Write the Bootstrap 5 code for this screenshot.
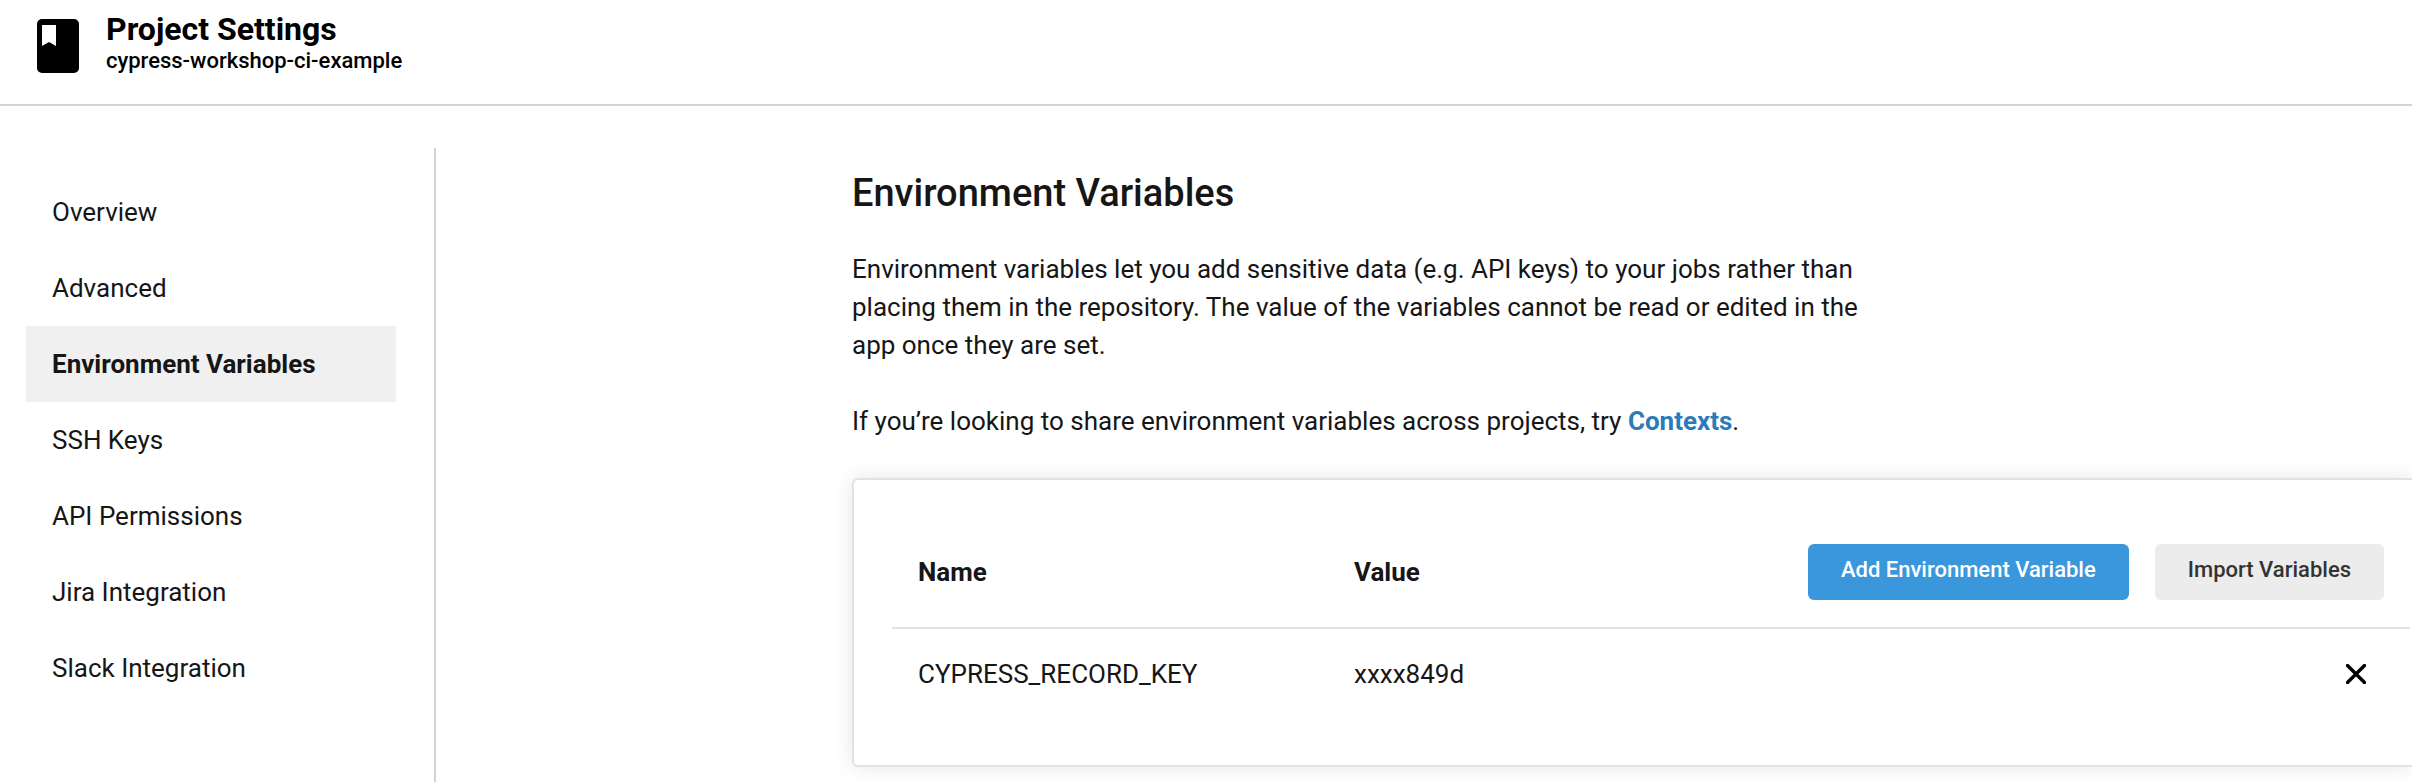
<!DOCTYPE html>
<html lang="en">
<head>
<meta charset="utf-8">
<meta name="viewport" content="width=device-width, initial-scale=1">
<title>Project Settings</title>
<link href="https://cdn.jsdelivr.net/npm/bootstrap@5.3.0/dist/css/bootstrap.min.css" rel="stylesheet">
<style>
  body { font-family: Roboto, "Liberation Sans", sans-serif; font-size: 26px; line-height: 38px; color: #161616; background: #fff; }
  .page-header { height: 106px; padding: 10px 36px; border-bottom: 2px solid #d3d3d3; color: #000; }
  .project-icon { width: 44px; height: 54px; margin-top: 9px; margin-right: 26px; }
  .page-title { font-size: 32px; line-height: 38px; font-weight: 700; }
  .page-subtitle { font-size: 22px; line-height: 26px; font-weight: 500; }
  .page-body { padding-top: 42px; }
  .side-nav { width: 436px; padding: 26px 38px 0 26px; border-right: 2px solid #d3d3d3; }
  .side-nav .nav-link { padding: 19px 26px; color: #161616; border-radius: 0; }
  .side-nav .nav-link.active { background: #f0f0f0; color: #161616; font-weight: 700; }
  .settings-main { min-width: 0; padding: 20px 0 10px 416px; }
  .section-title { font-size: 38px; line-height: 50px; font-weight: 500; margin-bottom: 32px; }
  .intro { max-width: 1012px; }
  .intro p { margin-bottom: 38px; }
  .intro a { color: #2b7bb9; font-weight: 700; text-decoration: none; }
  .vars-card { border: 2px solid #e2e2e2; border-right: 0; border-radius: 6px 0 0 6px; padding: 38px 2px 38px 38px; box-shadow: 0 0 20px rgba(0, 0, 0, .1); }
  .vars-table { table-layout: fixed; color: inherit; }
  .vars-table th, .vars-table td { padding: 0 26px; background: transparent; color: inherit; box-shadow: none; }
  .vars-table thead th { height: 110px; border-bottom: 2px solid #e2e2e2; font-weight: 700; vertical-align: middle; padding-bottom: 2px; }
  .vars-table tbody td { height: 99px; border: 0; padding-bottom: 9px; }
  .col-key { width: 436px; }
  .button-row { gap: 26px; }
  .btn-action { height: 56px; padding: 0 33px 4px; border: 0; border-radius: 6px; font-size: 22px; line-height: 28px; font-weight: 500; white-space: nowrap; }
  .btn-add, .btn-add:hover { background: #3b97dc; color: #fff; }
  .btn-import, .btn-import:hover { background: #ececec; color: #333; }
  .btn-remove { padding: 8px; margin-right: 10px; border: 0; line-height: 0; }
</style>
</head>
<body>
<div class="d-flex flex-column min-vh-100">
  <header class="page-header d-flex align-items-start">
    <svg class="project-icon flex-shrink-0" viewBox="0 0 44 54" aria-hidden="true">
      <path fill="#000" fill-rule="evenodd" d="M6 0h32a5 5 0 0 1 5 5v44a5 5 0 0 1-5 5H6a5 5 0 0 1-5-5V5a5 5 0 0 1 5-5zM6 6v21l7-4 7 4V6z"/>
    </svg>
    <div>
      <div class="page-title">Project Settings</div>
      <div class="page-subtitle">cypress-workshop-ci-example</div>
    </div>
  </header>

  <div class="page-body d-flex flex-grow-1">
    <nav class="side-nav nav flex-column flex-nowrap flex-shrink-0" aria-label="Project settings">
      <a class="nav-link" href="#overview">Overview</a>
      <a class="nav-link" href="#advanced">Advanced</a>
      <a class="nav-link active" aria-current="page" href="#environment">Environment Variables</a>
      <a class="nav-link" href="#ssh">SSH Keys</a>
      <a class="nav-link" href="#api">API Permissions</a>
      <a class="nav-link" href="#jira">Jira Integration</a>
      <a class="nav-link" href="#slack">Slack Integration</a>
    </nav>

    <main class="settings-main flex-grow-1">
      <h1 class="section-title">Environment Variables</h1>
      <div class="intro">
        <p>Environment variables let you add sensitive data (e.g. API keys) to your jobs rather than placing them in the repository. The value of the variables cannot be read or edited in the app once they are set.</p>
        <p>If you’re looking to share environment variables across projects, try <a href="#contexts">Contexts</a>.</p>
      </div>

      <section class="vars-card">
        <table class="vars-table table align-middle mb-0">
          <thead>
            <tr>
              <th class="col-key" scope="col">Name</th>
              <th class="col-key" scope="col">Value</th>
              <th scope="col">
                <div class="button-row d-flex justify-content-end">
                  <button type="button" class="btn btn-action btn-add">Add Environment Variable</button>
                  <button type="button" class="btn btn-action btn-import">Import Variables</button>
                </div>
              </th>
            </tr>
          </thead>
          <tbody>
            <tr>
              <td>CYPRESS_RECORD_KEY</td>
              <td>xxxx849d</td>
              <td>
                <div class="d-flex justify-content-end">
                  <button type="button" class="btn btn-remove" aria-label="Remove CYPRESS_RECORD_KEY">
                    <svg width="20" height="20" viewBox="0 0 20 20" aria-hidden="true"><path d="M1.500 1.500l17 17M18.500 1.500l-17 17" stroke="#000" stroke-width="3.400" stroke-linecap="round"/></svg>
                  </button>
                </div>
              </td>
            </tr>
          </tbody>
        </table>
      </section>
    </main>
  </div>
</div>
<script src="https://cdn.jsdelivr.net/npm/bootstrap@5.3.0/dist/js/bootstrap.bundle.min.js"></script>
</body>
</html>
